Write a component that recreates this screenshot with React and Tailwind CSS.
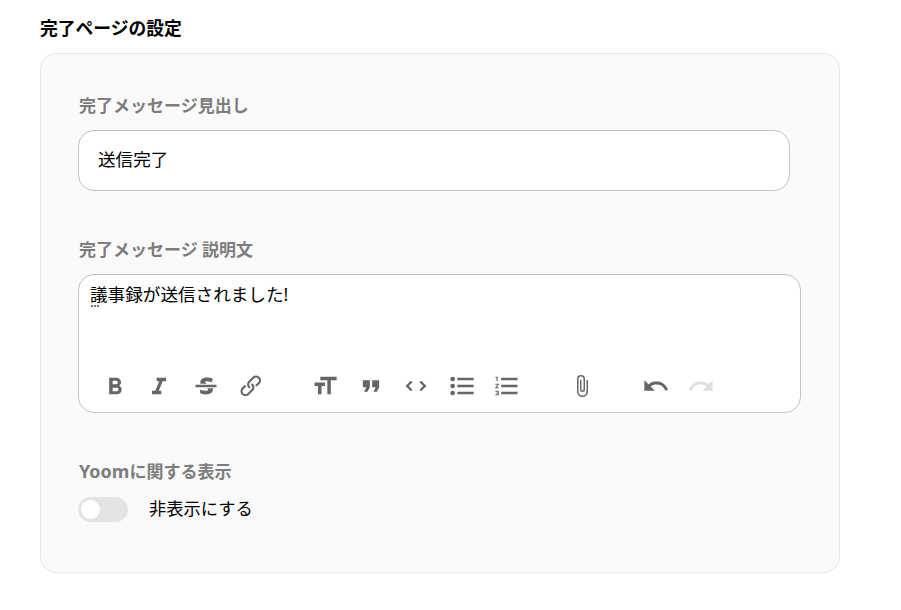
const icons = [
  { x: "w-[44px]", d: "M15.6 11.8c1-.7 1.6-1.8 1.6-2.8a4 4 0 0 0-4-4H7v14h7c2.1 0 3.7-1.7 3.7-3.8 0-1.5-.8-2.8-2.1-3.4zM10 7.5h3a1.5 1.5 0 1 1 0 3h-3v-3zm3.5 9H10v-3h3.5a1.5 1.5 0 1 1 0 3z" },
  { x: "w-[47px]", d: "M10 5v3h2.2l-3.4 8H6v3h8v-3h-2.2l3.4-8H18V5h-8z" },
  { x: "w-[45px]", d: "M12.73 14l.28.14c.26.15.45.3.57.44.12.14.18.3.18.5 0 .3-.15.56-.44.75-.3.2-.76.3-1.39.3A13.52 13.52 0 0 1 7 14.95v3.37a10.64 10.64 0 0 0 4.84.88c1.26 0 2.35-.19 3.28-.56.93-.37 1.64-.9 2.14-1.57s.74-1.45.74-2.32c0-.26-.02-.51-.06-.75h-5.21zm-5.5-4c-.08-.34-.12-.7-.12-1.1 0-1.29.52-2.3 1.58-3.02 1.05-.72 2.5-1.08 4.34-1.08 1.62 0 3.28.34 4.97 1l-1.3 2.93c-1.47-.6-2.73-.9-3.8-.9-.55 0-.96.08-1.2.26-.26.17-.38.38-.38.64 0 .27.16.52.48.74.17.12.53.3 1.05.53H7.23zM3 13h18v-2H3v2z" },
  { x: "w-[73px]", d: "M9.88 13.7a4.3 4.3 0 0 1 0-6.07l3.37-3.37a4.26 4.26 0 0 1 6.07 0 4.3 4.3 0 0 1 0 6.06l-1.96 1.72a.91.91 0 1 1-1.3-1.3l1.97-1.71a2.46 2.46 0 0 0-3.48-3.48l-3.38 3.37a2.46 2.46 0 0 0 0 3.48.91.91 0 1 1-1.3 1.3zM4.25 19.46a4.3 4.3 0 0 1 0-6.07l1.93-1.9a.91.91 0 1 1 1.3 1.3l-1.93 1.9a2.46 2.46 0 0 0 3.48 3.48l3.37-3.38c.96-.96.96-2.52 0-3.48a.91.91 0 1 1 1.3-1.3 4.3 4.3 0 0 1 0 6.07l-3.38 3.38a4.26 4.26 0 0 1-6.07 0z" },
  { x: "w-[47px]", size: "w-7 h-7 ml-[1px]", d: "M12 9v3H9v7H6v-7H3V9h9zM8 4h14v3h-5v12h-3V7H8V4z" },
  { x: "w-[45px]", d: "M6 17h3l2-4V7H5v6h3zm8 0h3l2-4V7h-6v6h3z" },
  { x: "w-[46px]", d: "M18.2 12L15 15.2l1.4 1.4L21 12l-4.6-4.6L15 8.8l3.2 3.2zM5.8 12L9 8.8 7.6 7.4 3 12l4.6 4.6L9 15.2 5.8 12z" },
  { x: "w-[45px]", d: "M4 4a2 2 0 1 0 0 4 2 2 0 0 0 0-4zm0 6a2 2 0 1 0 0 4 2 2 0 0 0 0-4zm0 6a2 2 0 1 0 0 4 2 2 0 0 0 0-4zm4 3h14v-2H8v2zm0-6h14v-2H8v2zm0-8v2h14V5H8z" },
  { x: "w-[76px]", d: "M2 17h2v.5H3v1h1v.5H2v1h3v-4H2v1zm1-9h1V4H2v1h1v3zm-1 3h1.8L2 13.1v.9h3v-1H3.2L5 10.9V10H2v1zm5-6v2h14V5H7zm0 14h14v-2H7v2zm0-6h14v-2H7v2z" },
  { x: "w-[73px]", size: "w-6 h-6 ml-[1px]", d: "M16.5 6v11.5a4 4 0 1 1-8 0V5a2.5 2.5 0 0 1 5 0v10.5a1 1 0 1 1-2 0V6H10v9.5a2.5 2.5 0 0 0 5 0V5a4 4 0 1 0-8 0v12.5a5.5 5.5 0 0 0 11 0V6h-1.5z" },
  { x: "w-[45px]", d: "M12.5 8c-2.6 0-5 1-6.9 2.6L2 7v9h9l-3.6-3.6A8 8 0 0 1 20 16l2.4-.8a10.5 10.5 0 0 0-10-7.2z" },
  { x: "w-[45px] opacity-20", d: "M18.4 10.6a10.5 10.5 0 0 0-16.9 4.6L4 16a8 8 0 0 1 12.7-3.6L13 16h9V7l-3.6 3.6z" },
];

export default function App() {
  return (
    <div className="w-[901px] h-[610px] bg-white pl-10 pt-4 text-black font-['Noto_Sans','Noto_Sans_CJK_JP',sans-serif]">
      <h2 className="text-[17.8px] font-bold leading-6 mb-[13px]">完了ページの設定</h2>

      <div className="w-[800px] h-[520px] bg-[#fafafa] border border-[#e6e6e6] rounded-2xl pl-[37px] pt-10">
        <div className="text-[17px] font-bold leading-6 text-[#7d7d7d] mb-3 pl-[1px]">完了メッセージ見出し</div>
        <div className="w-[712px] h-[61px] bg-white border border-[#c4c4c4] rounded-2xl flex items-center px-[19px] pb-[2px] text-[17.6px] mb-[47px]">
          送信完了
        </div>

        <div className="text-[17px] font-bold leading-6 text-[#7d7d7d] mb-3 pl-[1px]">完了メッセージ 説明文</div>
        <div className="relative w-[723px] h-[139px] bg-white border border-[#c4c4c4] rounded-2xl px-[11px] pt-[7px] mb-[46px]">
          <div className="text-[17.6px] leading-6">議事録が送信されました!</div>
          <div className="absolute left-3 top-[30px] w-[8px] h-[2px] border-t-2 border-dotted border-[#777]" />
          <div className="absolute left-[22px] top-[97px] flex items-center">
            {icons.map((icon) => (
              <div key={icon.d} className={icon.x}>
                <svg viewBox="0 0 24 24" className={`${icon.size || "w-7 h-7"} fill-[#666]`}>
                  <path d={icon.d} />
                </svg>
              </div>
            ))}
          </div>
        </div>

        <div className="text-[17px] font-bold leading-6 text-[#7d7d7d] mb-[13px] pl-[1px]">
          <span className="text-[18px]">Yoom</span>に関する表示
        </div>
        <div className="flex items-center h-[25px]">
          <div className="w-[50px] h-[25px] rounded-full bg-[#e4e4e4] p-[3px]">
            <div className="w-[19px] h-[19px] rounded-full bg-white" />
          </div>
          <span className="ml-[21px] text-[17.3px] leading-6 -mt-[2px]">非表示にする</span>
        </div>
      </div>
    </div>
  );
}
